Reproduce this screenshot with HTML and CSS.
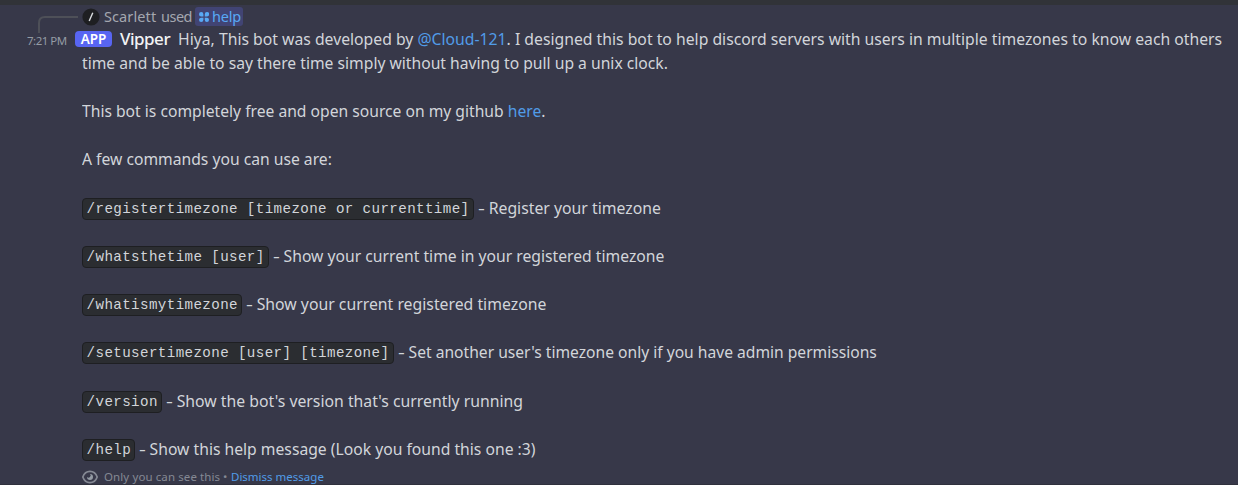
FILE: index.html
```
<!DOCTYPE html>
<html lang="en">
<head>
<meta charset="utf-8">
<title>Vipper</title>
<link rel="stylesheet" href="styles.css">
</head>
<body>
<main class="message">
  <div class="reply">
    <svg class="spine" width="40" height="17" viewBox="0 0 40 17"><path d="M1 17V7Q1 1 7 1H40" fill="none" stroke="#4e5058" stroke-width="2"/></svg>
    <svg class="slash" width="18" height="18" viewBox="0 0 18 18"><circle cx="9" cy="9" r="8.6" fill="#1e1f22"/><path d="M10.8 4.8L7.2 13" stroke="#dbdee1" stroke-width="1.4"/></svg>
    <span class="user">Scarlett</span><span class="used">used</span>
    <span class="command"><svg width="10" height="10" viewBox="0 0 10 10" fill="#58a9f5"><path d="M0 2.2A2.200 2.200 0 1 1 4.400 2.200V4.400H2.200A2.200 2.200 0 0 1 0 2.200M5.800 2.200A2.200 2.200 0 1 1 7.800 4.400H5.800ZM0 7.800A2.200 2.200 0 0 1 2.200 5.800H4.400V7.800A2.200 2.200 0 0 1 0 7.800M5.800 5.800H7.800A2.100 2.100 0 1 1 5.800 7.800Z"/></svg><span>help</span></span>
  </div>
  <div class="first">
    <time>7:21 PM</time><span class="app">APP</span><strong class="name">Vipper</strong><span class="text t1">Hiya, This bot was developed by <a>@Cloud-121</a>. I designed this bot to help discord servers with users in multiple timezones to know each others</span>
  </div>
  <div class="body">
    <p><span class="text t2">time and be able to say there time simply without having to pull up a unix clock.</span></p>
    <p></p>
    <p><span class="text t3">This bot is completely free and open source on my github <a>here</a>.</span></p>
    <p></p>
    <p><span class="text t2">A few commands you can use are:</span></p>
    <p></p>
    <p><code>/registertimezone [timezone or currenttime]</code><span class="text c1"><i class="dash">-</i> Register your timezone</span></p>
    <p></p>
    <p><code>/whatsthetime [user]</code><span class="text c2"><i class="dash">-</i> Show your current time in your registered timezone</span></p>
    <p></p>
    <p><code>/whatismytimezone</code><span class="text c1"><i class="dash">-</i> Show your current registered timezone</span></p>
    <p></p>
    <p><code>/setusertimezone [user] [timezone]</code><span class="text t4"><i class="dash">-</i> Set another user's timezone only if you have admin permissions</span></p>
    <p></p>
    <p><code>/version</code><span class="text c1"><i class="dash">-</i> Show the bot's version that's currently running</span></p>
    <p></p>
    <p><code>/help</code><span class="text c2"><i class="dash">-</i> Show this help message (Look you found this one :3)</span></p>
  </div>
  <footer>
    <svg width="16" height="14" viewBox="0 0 16 14"><path d="M.8 7C3.500 -.5 12.500 -.5 15.200 7C12.500 14.500 3.500 14.500 .8 7Z" fill="none" stroke="#858994" stroke-width="1.7"/><path d="M8 4A3 3 0 1 1 5 7A1.700 1.700 0 0 0 8 4Z" fill="#949ba4"/></svg>
    <span class="only">Only you can see this</span><span class="dot">•</span><a class="dismiss">Dismiss message</a>
  </footer>
</main>
</body>
</html>
```
FILE: styles.css
```
* { box-sizing: border-box; }
body { margin: 0; width: 1238px; height: 485px; overflow: hidden; background: #373849; color: #d2d5da; font: 17px/24.1px "Noto Sans", sans-serif; white-space: nowrap; }
a { color: #519ce8; }
.message { height: 485px; border-top: 5px solid #313338; border-bottom: 1px solid #30313d; }
.reply { display: flex; height: 22px; padding: 2px 0 0 38px; color: #a4a7b0; font-size: 14.5px; line-height: 19px; }
.spine { margin: 9px 4px 0 0; flex: none; }
.slash { margin: 1px 4px 0 0; flex: none; }
.user { width: 57px; font-weight: 400; letter-spacing: .1px; }
.used { width: 34px; letter-spacing: -.5px; }
.command { display: flex; align-items: center; gap: 3px; width: 48px; height: 19px; padding-left: 4px; border-radius: 3px; background: #414474; color: #58a9f5; font-weight: 400; letter-spacing: -.2px; }
.first { display: flex; height: 24px; line-height: 24px; }
.first > * { flex: none; }
time { width: 75px; padding: 2px 0 0 27px; color: #949ba4; font-size: 11.5px; letter-spacing: -.5px; }
.app { width: 37px; height: 16px; margin: 4px 8px 0 0; border-radius: 4px; background: #5865f2; color: #fff; font-size: 13.5px; font-weight: 600; line-height: 16px; text-align: center; }
.name { width: 58px; color: #f2f3f5; font-weight: 500; letter-spacing: -.5px; }
.text { display: block; transform-origin: 0 50%; }
.t1 { transform: scaleX(.926); }
.t2 { transform: scaleX(.922); }
.t3 { transform: scaleX(.921); }
.t4 { transform: scaleX(.919); }
.c1 { transform: scaleX(.929); }
.c2 { transform: scaleX(.923); }
.dash { display: inline-block; font-style: normal; margin-right: 1.6px; transform: scaleX(1.35); transform-origin: 0 50%; }
.body { padding-left: 82.2px; }
p { height: 24.11px; margin: 0; display: flex; }
code { height: 22px; margin: 2px 4px 0 -.2px; padding: 0 3.2px 0 3.6px; border: 1px solid #1e1f22; border-radius: 4px; background: #2b2d31; font: 14.2px/21px "Liberation Mono", monospace; letter-spacing: .39px; }
footer { display: flex; padding-left: 82px; color: #858994; font-size: 11.5px; line-height: 16px; margin-top: 8px; }
footer svg { margin: 1px 6px 0 0; }
.only { width: 119px; letter-spacing: .1px; }
.dot { width: 8px; }
```
